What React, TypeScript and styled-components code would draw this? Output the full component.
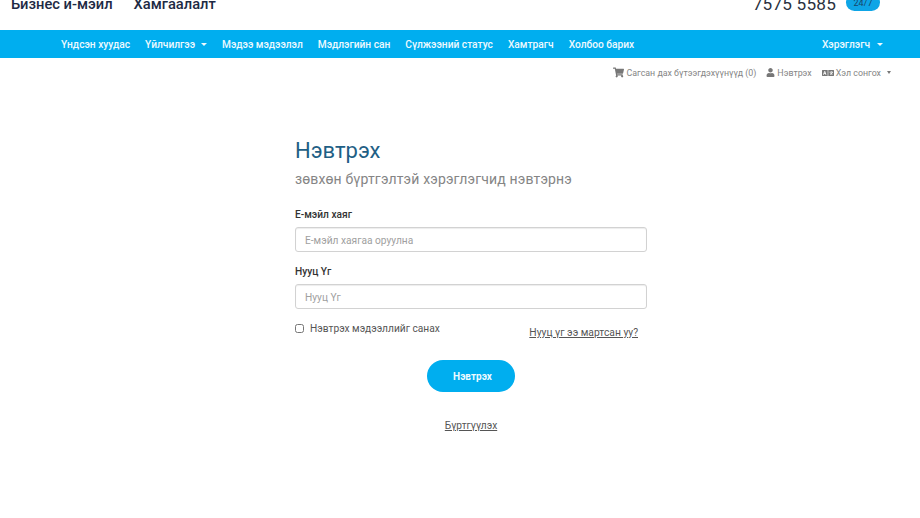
import React from "react";
import styled, { createGlobalStyle } from "styled-components";
import { FaShoppingCart, FaUser, FaLanguage } from "react-icons/fa";

const Global = createGlobalStyle`
  html, body { margin: 0; padding: 0; background: #fff; }
  body { font-family: Roboto, "Liberation Sans", sans-serif; color: #333; overflow: hidden; }
  * { box-sizing: border-box; }
`;

const Page = styled.div`
  width: 920px;
  height: 518px;
  overflow: hidden;
`;

const Header = styled.header`
  height: 30px;
  display: flex;
  justify-content: space-between;
  align-items: flex-end;
  padding: 0 40px 16px 11px;
  overflow: hidden;
`;

const HeaderLinks = styled.div`
  display: flex;
  gap: 21px;
`;

const HeaderLink = styled.a`
  font-size: 14.7px;
  line-height: 20px;
  font-weight: 500;
  color: #1d2a44;
`;

const Contact = styled.div`
  display: flex;
  align-items: flex-end;
  gap: 10px;
`;

const Phone = styled.span`
  font-size: 17.2px;
  line-height: 20px;
  color: #2a3140;
  letter-spacing: 0.2px;
`;

const Badge = styled.span`
  width: 34px;
  height: 17px;
  margin-bottom: 3px;
  border-radius: 9px;
  background: #0ea5e6;
  color: #17456a;
  font-size: 9px;
  line-height: 18px;
  text-align: center;
`;

const NavBar = styled.nav`
  height: 28px;
  background: #00aeef;
  display: flex;
  align-items: center;
  justify-content: space-between;
  padding: 0 37px 0 61px;
`;

const NavList = styled.div`
  display: flex;
  gap: 15px;
`;

const NavItem = styled.a`
  font-size: 10.2px;
  font-weight: 500;
  color: #eef9fe;
  white-space: nowrap;
  display: flex;
  align-items: center;
`;

const Caret = styled.span<{ $color: string; $gap: number; $half: number }>`
  display: inline-block;
  margin-left: ${(p) => p.$gap}px;
  width: 0;
  height: 0;
  border-left: ${(p) => p.$half}px solid transparent;
  border-right: ${(p) => p.$half}px solid transparent;
  border-top: 3px solid ${(p) => p.$color};
`;

const SubBar = styled.div`
  height: 29px;
  display: flex;
  justify-content: flex-end;
  align-items: center;
  gap: 10px;
  padding-right: 29px;
`;

const SubItem = styled.a`
  display: flex;
  align-items: center;
  gap: 2px;
  font-size: 8.85px;
  color: #858585;
  white-space: nowrap;
  svg { color: #777; }
`;

const Main = styled.main`
  width: 352px;
  margin: 0 0 0 295px;
  padding-top: 50px;
`;

const Title = styled.h1`
  margin: 0;
  font-size: 22px;
  line-height: 28px;
  font-weight: 400;
  color: #1f5f85;
`;

const Subtitle = styled.p`
  margin: 4px 0 0;
  font-size: 14px;
  line-height: 20px;
  color: #858585;
  letter-spacing: 0.15px;
`;

const Field = styled.div<{ $gap: number }>`
  margin-top: ${(p) => p.$gap}px;
`;

const Label = styled.label`
  display: block;
  font-size: 10.2px;
  line-height: 14px;
  font-weight: 500;
  color: #333;
  margin-bottom: 5px;
`;

const Input = styled.input`
  display: block;
  width: 352px;
  height: 25px;
  border: 1px solid #d2d2d2;
  border-radius: 3px;
  padding: 1px 9px 0;
  font: 400 10.2px Roboto, sans-serif;
  color: #555;
  background: #fff;
  outline: none;
  box-shadow: inset 0 1px 1px rgba(0, 0, 0, 0.075);
  &::placeholder { color: #a0a0a0; opacity: 1; }
`;

const OptionsRow = styled.div`
  display: flex;
  justify-content: space-between;
  margin-top: 13px;
  padding-right: 9px;
`;

const Remember = styled.label`
  display: flex;
  align-items: center;
  gap: 6px;
  font-size: 10.2px;
  line-height: 14px;
  color: #555;
  height: 14px;
`;

const Check = styled.input`
  margin: -2px 0 0;
  width: 9px;
  height: 9px;
`;

const Forgot = styled.a`
  font-size: 10.3px;
  line-height: 14px;
  margin-top: 4px;
  color: #555;
  text-decoration: underline;
`;

const Actions = styled.div`
  display: flex;
  flex-direction: column;
  align-items: center;
  margin-top: 20px;
`;

const Submit = styled.button`
  width: 88px;
  height: 32px;
  border: none;
  border-radius: 16px;
  background: #00aeef;
  color: #eefaff;
  font: 700 10px Roboto, sans-serif;
  padding: 0 0 0 3px;
`;

const Register = styled.a`
  margin-top: 27px;
  font-size: 10.2px;
  line-height: 14px;
  color: #555;
  text-decoration: underline;
`;

export default function App() {
  return (
    <Page>
      <Global />
      <Header>
        <HeaderLinks>
          <HeaderLink>Бизнес и-мэйл</HeaderLink>
          <HeaderLink>Хамгаалалт</HeaderLink>
        </HeaderLinks>
        <Contact>
          <Phone>7575 5585</Phone>
          <Badge>24/7</Badge>
        </Contact>
      </Header>
      <NavBar>
        <NavList>
          <NavItem>Үндсэн хуудас</NavItem>
          <NavItem>Үйлчилгээ<Caret $color="#eef9fe" $gap={6} $half={3} /></NavItem>
          <NavItem>Мэдээ мэдээлэл</NavItem>
          <NavItem>Мэдлэгийн сан</NavItem>
          <NavItem>Сүлжээний статус</NavItem>
          <NavItem>Хамтрагч</NavItem>
          <NavItem>Холбоо барих</NavItem>
        </NavList>
        <NavItem>Хэрэглэгч<Caret $color="#eef9fe" $gap={7} $half={3} /></NavItem>
      </NavBar>
      <SubBar>
        <SubItem><FaShoppingCart size={11} />Сагсан дах бүтээгдэхүүнүүд (0)</SubItem>
        <SubItem><FaUser size={9} />Нэвтрэх</SubItem>
        <SubItem><FaLanguage size={12} />Хэл сонгох<Caret $color="#777" $gap={4} $half={2.5} /></SubItem>
      </SubBar>
      <Main>
        <Title>Нэвтрэх</Title>
        <Subtitle>зөвхөн бүртгэлтэй хэрэглэгчид нэвтэрнэ</Subtitle>
        <Field $gap={19}>
          <Label>Е-мэйл хаяг</Label>
          <Input placeholder="Е-мэйл хаягаа оруулна" />
        </Field>
        <Field $gap={13}>
          <Label>Нууц Үг</Label>
          <Input placeholder="Нууц Үг" />
        </Field>
        <OptionsRow>
          <Remember><Check type="checkbox" />Нэвтрэх мэдээллийг санах</Remember>
          <Forgot>Нууц үг ээ мартсан уу?</Forgot>
        </OptionsRow>
        <Actions>
          <Submit>Нэвтрэх</Submit>
          <Register>Бүртгүүлэх</Register>
        </Actions>
      </Main>
    </Page>
  );
}
